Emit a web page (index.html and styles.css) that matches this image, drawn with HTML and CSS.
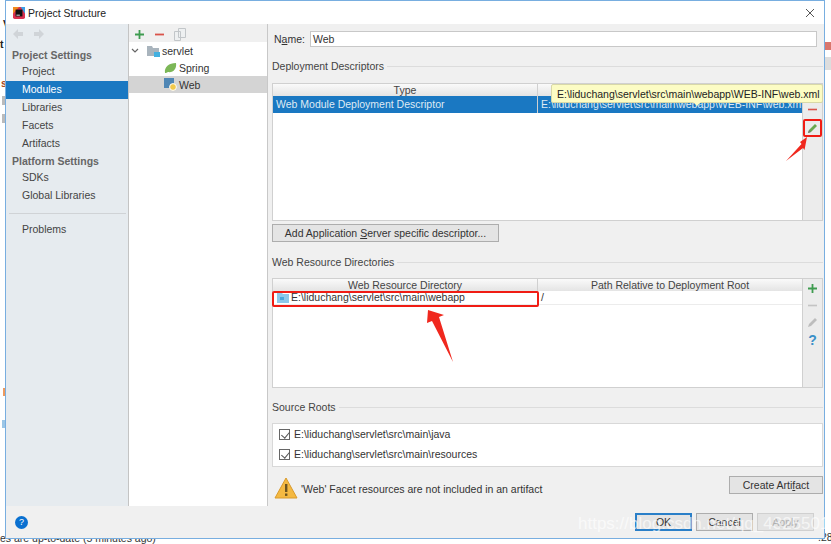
FILE: index.html
```html
<!DOCTYPE html>
<html lang="en">
<head>
    <meta charset="UTF-8">
    <title>Project Structure</title>
    <link rel="stylesheet" href="styles.css">
</head>
<body>
    <div class="backdrop">
        <span class="scrap scrap-v">V</span>
        <span class="scrap scrap-t">t</span>
        <span class="scrap scrap-s">s</span>
        <span class="scrap scrap-orange"></span>
        <span class="scrap scrap-grey1"></span>
        <span class="scrap scrap-grey2"></span>
        <span class="scrap scrap-blue"></span>
        <span class="scrap scrap-red"></span>
        <span class="scrap scrap-tab"></span>
        <span class="scrap scrap-status">es are up-to-date (5 minutes ago)</span>
        <span class="scrap scrap-num">.28</span>
    </div>

    <div class="dialog">
        <div class="titlebar">
            <svg class="app-icon" width="12" height="12" viewBox="0 0 14 14">
                <rect width="14" height="14" rx="2" fill="#d9304f"/>
                <path d="M0 0h7L0 8z" fill="#f28a1c"/>
                <path d="M14 0v8L9 0z" fill="#3aa0e8"/>
                <rect x="3" y="3" width="8" height="8" fill="#111"/>
                <rect x="4" y="9" width="4" height="1" fill="#fff"/>
            </svg>
            <span class="title">Project Structure</span>
            <svg class="close" width="10" height="10" viewBox="0 0 10 10">
                <path d="M1 1l8 8M9 1l-8 8" stroke="#555" stroke-width="1" fill="none"/>
            </svg>
        </div>

        <div class="main">
            <div class="sidebar">
                <div class="nav-tools">
                    <svg width="12" height="12" viewBox="0 0 12 12"><path d="M1 6l5-5v3h5v4H6v3z" fill="#d0d4d8"/></svg>
                    <svg width="12" height="12" viewBox="0 0 12 12"><path d="M11 6L6 1v3H1v4h5v3z" fill="#d0d4d8"/></svg>
                </div>
                <div class="nav-head">Project Settings</div>
                <div class="nav-item">Project</div>
                <div class="nav-item active">Modules</div>
                <div class="nav-item">Libraries</div>
                <div class="nav-item">Facets</div>
                <div class="nav-item">Artifacts</div>
                <div class="nav-head platform">Platform Settings</div>
                <div class="nav-item">SDKs</div>
                <div class="nav-item">Global Libraries</div>
                <div class="nav-sep"></div>
                <div class="nav-item">Problems</div>
            </div>

            <div class="tree">
                <div class="tree-tools">
                    <svg width="11" height="11" viewBox="0 0 11 11"><path d="M5.5 1v9M1 5.5h9" stroke="#3f9c50" stroke-width="1.8" fill="none"/></svg>
                    <svg width="11" height="11" viewBox="0 0 11 11"><path d="M1 5.5h9" stroke="#d9534a" stroke-width="1.8" fill="none"/></svg>
                    <svg width="12" height="13" viewBox="0 0 12 13"><path d="M4.5 .5h7v9h-7z M.5 3.5h6v9h-6z" fill="#eef0f1" stroke="#c2c6c9"/></svg>
                </div>
                <div class="tree-row">
                    <svg class="chevron" width="8" height="6" viewBox="0 0 8 6"><path d="M1 1l3 3 3-3" stroke="#666" stroke-width="1.2" fill="none"/></svg>
                    <svg width="13" height="12" viewBox="0 0 13 12"><path d="M0 1h5l1 2h6v8H0z" fill="#a9b4bd"/><rect x="7" y="7" width="6" height="5" fill="#43b0e0"/></svg>
                    <span>servlet</span>
                </div>
                <div class="tree-row child">
                    <svg width="13" height="12" viewBox="0 0 13 12"><path d="M1 11C0 5 5 1 12 1c1 6-3 10-8 9L2 11z" fill="#7cb757"/></svg>
                    <span>Spring</span>
                </div>
                <div class="tree-row child selected">
                    <svg width="13" height="13" viewBox="0 0 13 13"><rect width="10" height="10" fill="#4f86b4"/><circle cx="9" cy="9" r="3.4" fill="#f2c94c" stroke="#fff"/></svg>
                    <span>Web</span>
                </div>
            </div>

            <div class="content">
                <div class="name-row">
                    <label>N<u>a</u>me:</label>
                    <div class="name-input">Web</div>
                </div>

                <div class="section first">Deployment Descriptors</div>
                <div class="table-wrap desc-wrap">
                    <div class="table">
                        <div class="t-head">
                            <div class="c1">Type</div>
                            <div class="c2"></div>
                        </div>
                        <div class="t-row selected">
                            <div class="c1">Web Module Deployment Descriptor</div>
                            <div class="c2">E:\liduchang\servlet\src\main\webapp\WEB-INF\web.xml</div>
                        </div>
                    </div>
                    <div class="side-tools desc-tools">
                        <svg width="11" height="11" viewBox="0 0 11 11"><path d="M1 5.5h9" stroke="#d9534a" stroke-width="1.6" fill="none"/></svg>
                        <span class="pencil-box">
                            <svg width="11" height="11" viewBox="0 0 11 11"><path d="M1 10l1-3 6-6 2 2-6 6z" fill="#6aa84f"/><path d="M1 10l1-3 2 2z" fill="#777"/></svg>
                        </span>
                    </div>
                </div>
                <button class="btn add-btn">Add Application <u>S</u>erver specific descriptor...</button>

                <div class="section second">Web Resource Directories</div>
                <div class="table-wrap res-wrap">
                    <div class="table">
                        <div class="t-head">
                            <div class="c1">Web Resource Directory</div>
                            <div class="c2">Path Relative to Deployment Root</div>
                        </div>
                        <div class="t-row res-row">
                            <div class="c1 dir-cell">
                                <svg width="12" height="10" viewBox="0 0 12 10"><path d="M0 0h5l1 1h6v9H0z" fill="#8cc8ea"/><rect x="3" y="4" width="4" height="3" fill="#4aa6dc"/></svg>
                                E:\liduchang\servlet\src\main\webapp
                            </div>
                            <div class="c2">/</div>
                        </div>
                    </div>
                    <div class="side-tools res-tools">
                        <svg width="11" height="11" viewBox="0 0 11 11"><path d="M5.5 1v9M1 5.5h9" stroke="#3f9c50" stroke-width="1.8" fill="none"/></svg>
                        <svg width="11" height="11" viewBox="0 0 11 11"><path d="M1 5.5h9" stroke="#c4c4c4" stroke-width="1.6" fill="none"/></svg>
                        <svg width="11" height="11" viewBox="0 0 11 11"><path d="M1 10l1-3 6-6 2 2-6 6z" fill="#bdbdbd"/></svg>
                        <span class="help-mark">?</span>
                    </div>
                </div>

                <div class="section third">Source Roots</div>
                <div class="roots">
                    <div class="root"><span class="check"></span>E:\liduchang\servlet\src\main\java</div>
                    <div class="root"><span class="check"></span>E:\liduchang\servlet\src\main\resources</div>
                </div>

                <div class="warn-row">
                    <svg width="24" height="22" viewBox="0 0 24 22">
                        <path d="M12 1L23 21H1z" fill="#f4b942" stroke="#d99a2b"/>
                        <rect x="11" y="7" width="2.4" height="8" fill="#6b5320"/>
                        <rect x="11" y="16.500" width="2.4" height="2.400" fill="#6b5320"/>
                    </svg>
                    <span class="warn-text">'Web' Facet resources are not included in an artifact</span>
                    <button class="btn artifact-btn">Create Arti<u>f</u>act</button>
                </div>
            </div>
        </div>

        <div class="footer">
            <span class="help-round">?</span>
            <div class="actions">
                <button class="btn act default">OK</button>
                <button class="btn act">Cancel</button>
                <button class="btn act off">Apply</button>
            </div>
        </div>

        <div class="tooltip">E:\liduchang\servlet\src\main\webapp\WEB-INF\web.xml</div>
        <div class="mark-box"></div>
    </div>

    <svg class="arrow arrow-a" width="24" height="26" viewBox="0 0 24 26">
        <path d="M22 1L15 6l1.500 2L1 25l17-13 1.500 2z" fill="#f0281e"/>
    </svg>
    <svg class="arrow arrow-b" width="30" height="54" viewBox="0 0 30 54">
        <path d="M2 1l-1 13 5-2 21 41-14-45 5-2z" fill="#f0281e"/>
    </svg>
    <div class="watermark">https://blog.csdn.net/qq_43255017</div>
</body>
</html>
```

FILE: styles.css
```css
* {
    box-sizing: border-box;
}
html, body {
    margin: 0;
    height: 100%;
}
body {
    position: relative;
    width: 831px;
    height: 544px;
    overflow: hidden;
    background: #fff;
    font-family: "Liberation Sans", Arial, sans-serif;
    font-size: 10.5px;
    color: #333;
}
.backdrop {
    position: absolute;
    inset: 0;
}
.scrap {
    position: absolute;
    white-space: nowrap;
}
.scrap-v { left: 3px; top: 18px; font-weight: bold; color: #222; }
.scrap-t { left: 0; top: 38px; font-weight: bold; color: #222; }
.scrap-s { left: 1px; top: 77px; color: #a8481c; font-weight: bold; }
.scrap-orange { left: 3px; top: 388px; width: 3px; height: 8px; background: #ee9a5e; }
.scrap-grey1 { left: 2px; top: 96px; width: 3px; height: 9px; background: #bbb; }
.scrap-grey2 { left: 2px; top: 114px; width: 3px; height: 9px; background: #bbb; }
.scrap-blue { left: 2px; top: 420px; width: 3px; height: 8px; background: #9cc6e6; }
.scrap-red { left: 825px; top: 42px; width: 6px; height: 8px; background: #d9766c; }
.scrap-tab { left: 825px; top: 57px; width: 6px; height: 13px; background: #ddd; }
.scrap-status { left: 0; top: 532px; }
.scrap-num { left: 818px; top: 531px; }

.dialog {
    position: absolute;
    left: 5px;
    top: 0;
    width: 820px;
    height: 539px;
    background: #f0f0f0;
    border: 1px solid #78aee0;
    display: flex;
    flex-direction: column;
}
.titlebar {
    height: 23px;
    background: #fff;
    display: flex;
    align-items: center;
    padding: 0 9px 0 7px;
    color: #222;
}
.app-icon {
    margin-right: 3px;
}
.title {
    flex: 1;
}
.main {
    height: 482px;
    display: flex;
}
.sidebar {
    flex: none;
    width: 123px;
    background: #e6ebef;
    border-right: 1px solid #c4c4c4;
    color: #444;
}
.nav-tools {
    height: 21px;
    padding: 4px 0 0 6px;
    display: flex;
    gap: 9px;
}
.nav-head {
    font-weight: bold;
    color: #666;
    padding-left: 6px;
    height: 16px;
    line-height: 16px;
    margin-top: 2px;
}
.nav-head.platform {
    margin-top: 0;
}
.nav-item {
    height: 18px;
    line-height: 17px;
    padding-left: 16px;
}
.nav-item.active {
    background: #1a78c2;
    color: #fff;
}
.nav-sep {
    height: 1px;
    background: #d0d3d6;
    margin: 8px 2px 7px 3px;
}
.tree {
    flex: none;
    width: 139px;
    background: #fff;
    border-right: 1px solid #c8c8c8;
}
.tree-tools {
    height: 18px;
    background: #f0f0f0;
    padding: 3px 0 0 5px;
    display: flex;
    align-items: center;
    gap: 9px;
}
.tree-row {
    height: 17px;
    padding-left: 18px;
    display: flex;
    align-items: center;
    gap: 2px;
    position: relative;
}
.tree-row.child {
    padding-left: 35px;
}
.tree-row.selected {
    background: #d4d4d4;
}
.chevron {
    position: absolute;
    left: 2px;
    top: 6px;
}
.content {
    flex: 1;
    min-width: 0;
    padding: 7px 1px 0 4px;
    position: relative;
}
.name-row {
    display: flex;
    align-items: center;
    padding-right: 6px;
    height: 16px;
}
.name-row label {
    width: 38px;
    padding-left: 2px;
}
.name-input {
    flex: 1;
    height: 16px;
    background: #fff;
    border: 1px solid #c8c8c8;
    padding-left: 2px;
    line-height: 14px;
}
.section {
    display: flex;
    align-items: center;
    gap: 3px;
    height: 14px;
    color: #444;
}
.section::after {
    content: "";
    flex: 1;
    height: 1px;
    background: #dcdcdc;
}
.section.first { margin-top: 12px; }
.section.second { margin-top: 13px; }
.section.third { margin-top: 12px; }
.table-wrap {
    display: flex;
    border: 1px solid #d0d0d0;
    background: #fff;
}
.desc-wrap {
    height: 138px;
    margin-top: 10px;
}
.res-wrap {
    height: 110px;
    margin-top: 9px;
}
.table {
    flex: 1;
    min-width: 0;
}
.t-head {
    display: flex;
    height: 12px;
    line-height: 12px;
    background: linear-gradient(#fafafa, #e4e4e4);
    text-align: center;
    color: #444;
}
.c1 {
    flex: none;
    width: 265px;
    border-right: 1px solid #d0d0d0;
    white-space: nowrap;
}
.c2 {
    flex: 1;
    min-width: 0;
    white-space: nowrap;
    overflow: hidden;
}
.t-row {
    display: flex;
    height: 17px;
    line-height: 17px;
}
.t-row .c1, .t-row .c2 {
    padding-left: 3px;
}
.t-row.selected {
    background: #1a78c2;
    color: #dfeaf4;
}
.res-row {
    height: 14px;
    line-height: 13px;
    border-bottom: 1px solid #ececec;
}
.t-row .dir-cell {
    display: flex;
    align-items: center;
    gap: 2px;
    padding-left: 4px;
}
.side-tools {
    flex: none;
    width: 20px;
    background: #ececec;
    border-left: 1px solid #d0d0d0;
    display: flex;
    flex-direction: column;
    align-items: center;
}
.desc-tools {
    padding-top: 20px;
    gap: 4px;
}
.pencil-box {
    width: 19px;
    height: 18px;
    border: 2px solid #f01c14;
    border-radius: 2px;
    display: flex;
    align-items: center;
    justify-content: center;
}
.res-tools {
    padding-top: 4px;
    gap: 6px;
}
.help-mark {
    color: #3a90c8;
    font-weight: bold;
    font-size: 14px;
    line-height: 12px;
}
.btn {
    font: inherit;
    color: #333;
    background: #e4e4e4;
    border: 1px solid #adadad;
    padding: 0;
}
.add-btn {
    display: block;
    width: 227px;
    height: 18px;
    margin-top: 3px;
}
.roots {
    height: 44px;
    margin-top: 9px;
    background: #fff;
    border: 1px solid #d8d8d8;
    padding: 0 0 0 6px;
}
.root {
    height: 20px;
    display: flex;
    align-items: center;
    gap: 4px;
}
.check {
    width: 11px;
    height: 11px;
    border: 1px solid #666;
    position: relative;
}
.check::after {
    content: "";
    position: absolute;
    left: 3px;
    top: 0;
    width: 4px;
    height: 7px;
    border: solid #555;
    border-width: 0 1px 1px 0;
    transform: rotate(40deg);
}
.warn-row {
    display: flex;
    align-items: center;
    height: 28px;
    margin-top: 7px;
    padding-left: 2px;
}
.warn-text {
    flex: 1;
    margin-left: 3px;
    padding-top: 2px;
}
.artifact-btn {
    width: 94px;
    height: 18px;
    margin-top: -6px;
}
.footer {
    flex: 1;
    display: flex;
    align-items: center;
    justify-content: space-between;
    padding: 0 10px 0 9px;
}
.help-round {
    width: 13px;
    height: 13px;
    border-radius: 50%;
    background: #0a70d0;
    color: #fff;
    font-size: 9px;
    text-align: center;
    line-height: 13px;
}
.actions {
    display: flex;
    gap: 4px;
}
.act {
    width: 57px;
    height: 18px;
}
.act.default {
    border: 2px solid #2a7fc8;
}
.act.off {
    color: #b0b0b0;
    border-color: #d0d0d0;
}
.tooltip {
    position: absolute;
    left: 545px;
    top: 83px;
    width: 272px;
    height: 19px;
    line-height: 18px;
    background: #fcfcc4;
    border: 1px solid #d8d8a8;
    border-radius: 2px;
    padding-left: 5px;
    color: #222;
    white-space: nowrap;
}
.tooltip::after {
    content: "";
    position: absolute;
    left: 141px;
    bottom: -4px;
    border: solid transparent;
    border-width: 4px 4px 0;
    border-top-color: #fcfcc4;
}
.mark-box {
    position: absolute;
    left: 266px;
    top: 290px;
    width: 267px;
    height: 16px;
    border: 2px solid #f01c14;
    border-radius: 2px;
}
.arrow {
    position: absolute;
}
.arrow-a {
    left: 785px;
    top: 136px;
}
.arrow-b {
    left: 426px;
    top: 309px;
}
.watermark {
    position: absolute;
    left: 578px;
    top: 514px;
    font-family: "Liberation Sans", sans-serif;
    font-size: 17px;
    color: rgba(255,255,255,0.65);
    white-space: nowrap;
}
```
